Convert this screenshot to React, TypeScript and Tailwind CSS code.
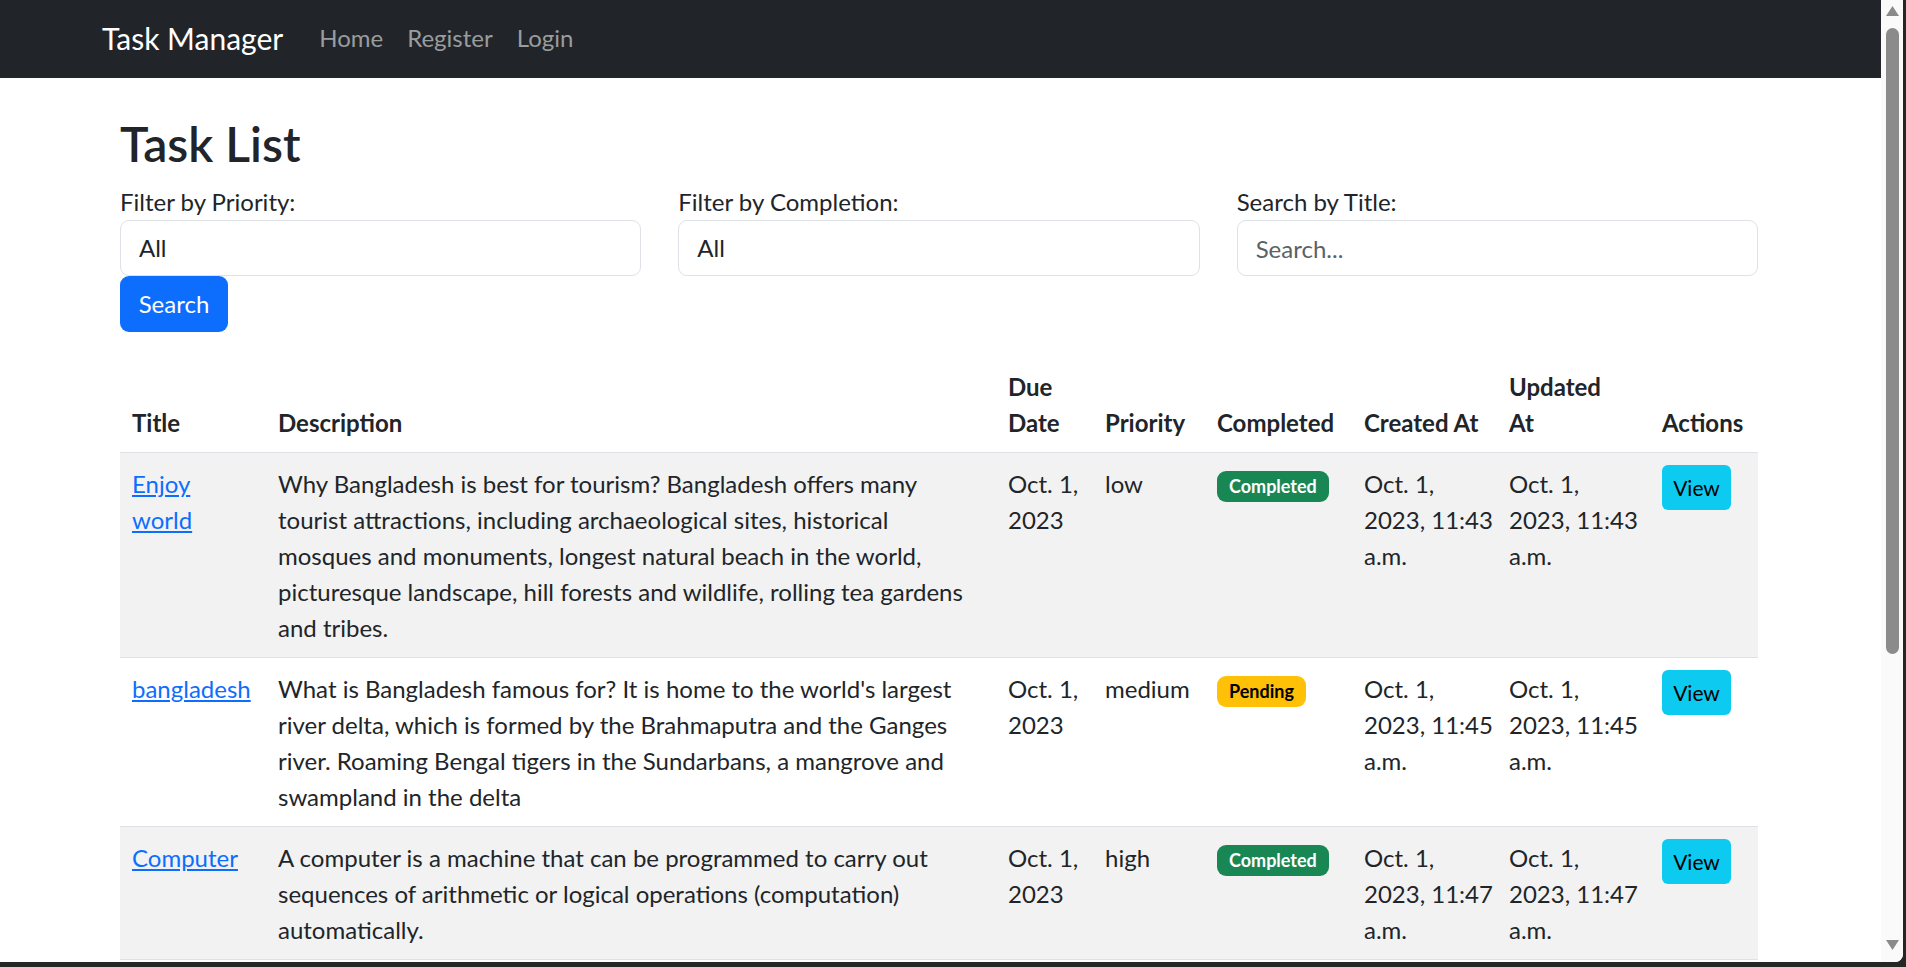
type Task = {
  title: string[];
  description: string[];
  due: string[];
  priority: string;
  completed: boolean;
  created: string[];
  updated: string[];
};

const tasks: Task[] = [
  {
    title: ['Enjoy', 'world'],
    description: [
      'Why Bangladesh is best for tourism? Bangladesh offers many',
      'tourist attractions, including archaeological sites, historical',
      'mosques and monuments, longest natural beach in the world,',
      'picturesque landscape, hill forests and wildlife, rolling tea gardens',
      'and tribes.',
    ],
    due: ['Oct. 1,', '2023'],
    priority: 'low',
    completed: true,
    created: ['Oct. 1,', '2023, 11:43', 'a.m.'],
    updated: ['Oct. 1,', '2023, 11:43', 'a.m.'],
  },
  {
    title: ['bangladesh'],
    description: [
      "What is Bangladesh famous for? It is home to the world's largest",
      'river delta, which is formed by the Brahmaputra and the Ganges',
      'river. Roaming Bengal tigers in the Sundarbans, a mangrove and',
      'swampland in the delta',
    ],
    due: ['Oct. 1,', '2023'],
    priority: 'medium',
    completed: false,
    created: ['Oct. 1,', '2023, 11:45', 'a.m.'],
    updated: ['Oct. 1,', '2023, 11:45', 'a.m.'],
  },
  {
    title: ['Computer'],
    description: [
      'A computer is a machine that can be programmed to carry out',
      'sequences of arithmetic or logical operations (computation)',
      'automatically.',
    ],
    due: ['Oct. 1,', '2023'],
    priority: 'high',
    completed: true,
    created: ['Oct. 1,', '2023, 11:47', 'a.m.'],
    updated: ['Oct. 1,', '2023, 11:47', 'a.m.'],
  },
];

const Lines = ({ lines }: { lines: string[] }) => (
  <>
    {lines.map((l, i) => (
      <span key={i} className="block whitespace-nowrap">
        {l}
      </span>
    ))}
  </>
);

const headers: string[][] = [
  ['Title'],
  ['Description'],
  ['Due', 'Date'],
  ['Priority'],
  ['Completed'],
  ['Created At'],
  ['Updated', 'At'],
  ['Actions'],
];

const colWidths = [146, 730, 97, 112, 147, 145, 153, 108];

const Navbar = () => (
  <nav className="h-[78px] bg-[#212529] flex items-center pl-[102px] pb-[2px]">
    <a href="#" className="text-[30px] text-white mr-[24px] leading-[45px]">
      Task Manager
    </a>
    <div className="flex items-center text-[24px] text-[#9a9c9e]">
      <a href="#" className="px-[12px]">Home</a>
      <a href="#" className="px-[12px]">Register</a>
      <a href="#" className="px-[12px]">Login</a>
    </div>
  </nav>
);

const Scrollbar = () => (
  <div className="w-[22px] flex-none bg-[#fafafa] flex flex-col items-start pl-[5px]">
    <svg width="13" height="10" viewBox="0 0 13 10" className="mt-[6px]">
      <polygon points="6.5,0 13,10 0,10" fill="#8a8a8a" />
    </svg>
    <div className="mt-[12px] w-[13px] h-[626px] rounded-full bg-[#8b8b8b]" />
    <div className="flex-1" />
    <svg width="13" height="10" viewBox="0 0 13 10" className="mb-[12px]">
      <polygon points="0,0 13,0 6.5,10" fill="#8a8a8a" />
    </svg>
  </div>
);

export default function App() {
  return (
    <div className="w-[1906px] h-[967px] overflow-hidden bg-[#262626] font-['Lato','Noto_Sans',sans-serif] text-[#212529]">
      <div className="w-[1903px] h-[962px] flex bg-white rounded-br-[8px] overflow-hidden">
        <div className="w-[1881px] flex-none overflow-hidden">
          <Navbar />

          <main className="ml-[120px] w-[1638px] pt-[37px]">
            <h2 className="text-[48px] leading-[58px] font-semibold">Task List</h2>

            {/* Filters */}
            <div className="mt-[11px] grid grid-cols-3 gap-x-[37px]">
              <div>
                <label className="block text-[24px] leading-[36px]">Filter by Priority:</label>
                <select className="appearance-none w-full h-[56px] border border-[#dee2e6] rounded-[9px] px-[18px] text-[24px] bg-white outline-none">
                  <option>All</option>
                </select>
              </div>
              <div>
                <label className="block text-[24px] leading-[36px]">Filter by Completion:</label>
                <select className="appearance-none w-full h-[56px] border border-[#dee2e6] rounded-[9px] px-[18px] text-[24px] bg-white outline-none">
                  <option>All</option>
                </select>
              </div>
              <div>
                <label className="block text-[24px] leading-[36px]">Search by Title:</label>
                <input
                  placeholder="Search..."
                  className="w-full h-[56px] border border-[#dee2e6] rounded-[9px] px-[18px] text-[24px] placeholder:text-[#5c6166] outline-none"
                />
              </div>
            </div>
            <button className="w-[108px] h-[56px] bg-[#0d6efd] text-white text-[24px] rounded-[9px]">Search</button>

            {/* Tasks table */}
            <table className="mt-[24px] w-[1638px] table-fixed border-collapse text-[24px] leading-[36px]">
              <colgroup>
                {colWidths.map((w, i) => (
                  <col key={i} style={{ width: w }} />
                ))}
              </colgroup>
              <thead>
                <tr>
                  {headers.map((h, i) => (
                    <th key={i} className="px-[12px] pt-[13px] pb-[11px] align-bottom text-left font-bold border-b border-[#dee2e6]">
                      <Lines lines={h} />
                    </th>
                  ))}
                </tr>
              </thead>
              <tbody>
                {tasks.map((t, i) => (
                  <tr key={i} className={i % 2 === 0 ? 'bg-[#f2f2f2]' : 'bg-white'}>
                    <td className="px-[12px] pt-[13px] pb-[11px] align-top border-b border-[#dee2e6]">
                      <a href="#" className="text-[#0d6efd] underline">
                        <Lines lines={t.title} />
                      </a>
                    </td>
                    <td className="px-[12px] pt-[13px] pb-[11px] align-top border-b border-[#dee2e6]">
                      <Lines lines={t.description} />
                    </td>
                    <td className="px-[12px] pt-[13px] pb-[11px] align-top border-b border-[#dee2e6]">
                      <Lines lines={t.due} />
                    </td>
                    <td className="px-[12px] pt-[13px] pb-[11px] align-top border-b border-[#dee2e6]">{t.priority}</td>
                    <td className="px-[12px] pt-[13px] pb-[11px] align-top border-b border-[#dee2e6]">
                      {t.completed ? (
                        <span className="inline-block align-top mt-[5px] px-[12px] h-[31px] leading-[31px] text-[18px] font-bold rounded-[9px] text-white bg-[#198754]">
                          Completed
                        </span>
                      ) : (
                        <span className="inline-block align-top mt-[5px] px-[12px] h-[31px] leading-[31px] text-[18px] font-bold rounded-[9px] text-black bg-[#ffc107]">
                          Pending
                        </span>
                      )}
                    </td>
                    <td className="px-[12px] pt-[13px] pb-[11px] align-top border-b border-[#dee2e6]">
                      <Lines lines={t.created} />
                    </td>
                    <td className="px-[12px] pt-[13px] pb-[11px] align-top border-b border-[#dee2e6]">
                      <Lines lines={t.updated} />
                    </td>
                    <td className="px-[12px] pt-[13px] pb-[11px] align-top border-b border-[#dee2e6]">
                      <button className="block -mt-[1px] w-[69px] h-[45px] bg-[#0dcaf0] rounded-[6px] text-[21px] text-black">
                        View
                      </button>
                    </td>
                  </tr>
                ))}
              </tbody>
            </table>
          </main>
        </div>
        <Scrollbar />
      </div>
    </div>
  );
}
